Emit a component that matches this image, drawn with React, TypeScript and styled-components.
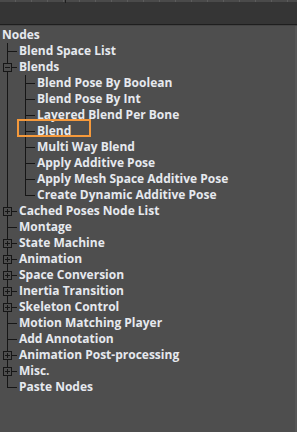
import React from 'react';
import styled, { createGlobalStyle } from 'styled-components';

interface TreeNode {
  label: string;
  expandable?: boolean;
  expanded?: boolean;
  highlight?: boolean;
  children?: TreeNode[];
}

const tree: TreeNode = {
  label: 'Nodes',
  expanded: true,
  children: [
    { label: 'Blend Space List' },
    {
      label: 'Blends',
      expandable: true,
      expanded: true,
      children: [
        { label: 'Blend Pose By Boolean' },
        { label: 'Blend Pose By Int' },
        { label: 'Layered Blend Per Bone' },
        { label: 'Blend', highlight: true },
        { label: 'Multi Way Blend' },
        { label: 'Apply Additive Pose' },
        { label: 'Apply Mesh Space Additive Pose' },
        { label: 'Create Dynamic Additive Pose' },
      ],
    },
    { label: 'Cached Poses Node List', expandable: true },
    { label: 'Montage' },
    { label: 'State Machine', expandable: true },
    { label: 'Animation', expandable: true },
    { label: 'Space Conversion', expandable: true },
    { label: 'Inertia Transition', expandable: true },
    { label: 'Skeleton Control', expandable: true },
    { label: 'Motion Matching Player' },
    { label: 'Add Annotation' },
    { label: 'Animation Post-processing', expandable: true },
    { label: 'Misc.', expandable: true },
    { label: 'Paste Nodes' },
  ],
};

const LINE = '#161616';

// one guide cell: 'pass' = vertical through, 'mid' = ├, 'last' = └, 'none' = empty
type Guide = 'pass' | 'mid' | 'last' | 'none';

const GuideCell: React.FC<{ kind: Guide; box?: 'plus' | 'minus' }> = ({ kind, box }) => (
  <svg width="18" height="16" viewBox="0 0 18 16" style={{ display: 'block', flexShrink: 0 }}>
    {kind !== 'none' && (
      <line
        x1="7.5"
        y1="0"
        x2="7.5"
        y2={kind === 'last' ? 8.5 : 16}
        stroke={LINE}
        strokeWidth="1"
        shapeRendering="crispEdges"
      />
    )}
    {(kind === 'mid' || kind === 'last') && (
      <line x1="7" y1="8.5" x2="17" y2="8.5" stroke={LINE} strokeWidth="1" shapeRendering="crispEdges" />
    )}
    {box && (
      <g shapeRendering="crispEdges">
        <rect x="3.5" y="4.5" width="8" height="8" fill="#4e4e4e" stroke={LINE} strokeWidth="1" />
        <line x1="5" y1="8.5" x2="10" y2="8.5" stroke={LINE} strokeWidth="1" />
        {box === 'plus' && <line x1="7.5" y1="6" x2="7.5" y2="11" stroke={LINE} strokeWidth="1" />}
      </g>
    )}
  </svg>
);

const renderChildren = (nodes: TreeNode[], ancestors: boolean[]): React.ReactNode[] =>
  nodes.map((node, index) => {
    const isLast = index === nodes.length - 1;
    return (
      <React.Fragment key={node.label}>
        <Row>
          {ancestors.map((hasMore, i) => (
            <GuideCell key={i} kind={hasMore ? 'pass' : 'none'} />
          ))}
          <GuideCell
            kind={isLast ? 'last' : 'mid'}
            box={node.expandable ? (node.expanded ? 'minus' : 'plus') : undefined}
          />
          <Label $highlight={node.highlight}>{node.label}</Label>
        </Row>
        {node.expanded && node.children && renderChildren(node.children, [...ancestors, !isLast])}
      </React.Fragment>
    );
  });

const App: React.FC = () => (
  <>
    <GlobalStyle />
    <Window>
      <Ruler />
      <Header />
      <Divider />
      <Panel>
        <Row>
          <RootLabel>{tree.label}</RootLabel>
        </Row>
        {renderChildren(tree.children || [], [])}
      </Panel>
    </Window>
  </>
);

export default App;

// Styled components

const GlobalStyle = createGlobalStyle`
  html, body {
    margin: 0;
    padding: 0;
    background: #4e4e4e;
  }
  body {
    font-family: "Open Sans", "Noto Sans", sans-serif;
  }
`;

const Window = styled('div')`
  display: flex;
  flex-direction: column;
  width: 297px;
  height: 432px;
  overflow: hidden;
  background: #4e4e4e;
`;

const Ruler = styled('div')`
  height: 2px;
  flex-shrink: 0;
  background: repeating-linear-gradient(
    to right,
    #4a4a4a 0px,
    #4a4a4a 15px,
    #5c5c5c 15px,
    #5c5c5c 16px
  );
  position: relative;
  &::after {
    content: '';
    position: absolute;
    left: 65px;
    top: 0;
    width: 1px;
    height: 3px;
    background: #1e1e1e;
  }
`;

const Header = styled('div')`
  height: 22px;
  flex-shrink: 0;
  background: #353535;
`;

const Divider = styled('div')`
  height: 2px;
  flex-shrink: 0;
  border-top: 1px solid #1e1e1e;
  border-bottom: 1px solid #444444;
  box-sizing: border-box;
`;

const Panel = styled('div')`
  flex: 1;
  display: flex;
  flex-direction: column;
  padding-top: 1px;
  border-right: 2px solid #565656;
  background: #4e4e4e;
`;

const Row = styled('div')`
  display: flex;
  align-items: center;
  height: 16px;
`;

const Label = styled('span')<{ $highlight?: boolean }>`
  position: relative;
  margin-left: 1px;
  font-size: 12px;
  font-weight: 700;
  line-height: 16px;
  color: #e6e9ee;
  white-space: nowrap;
  &::after {
    content: '';
    display: ${(p) => (p.$highlight ? 'block' : 'none')};
    position: absolute;
    left: -20px;
    top: -4px;
    width: 74px;
    height: 18px;
    box-sizing: border-box;
    border: 2px solid #f5993b;
  }
`;

const RootLabel = styled(Label)`
  margin-left: 2px;
`;
